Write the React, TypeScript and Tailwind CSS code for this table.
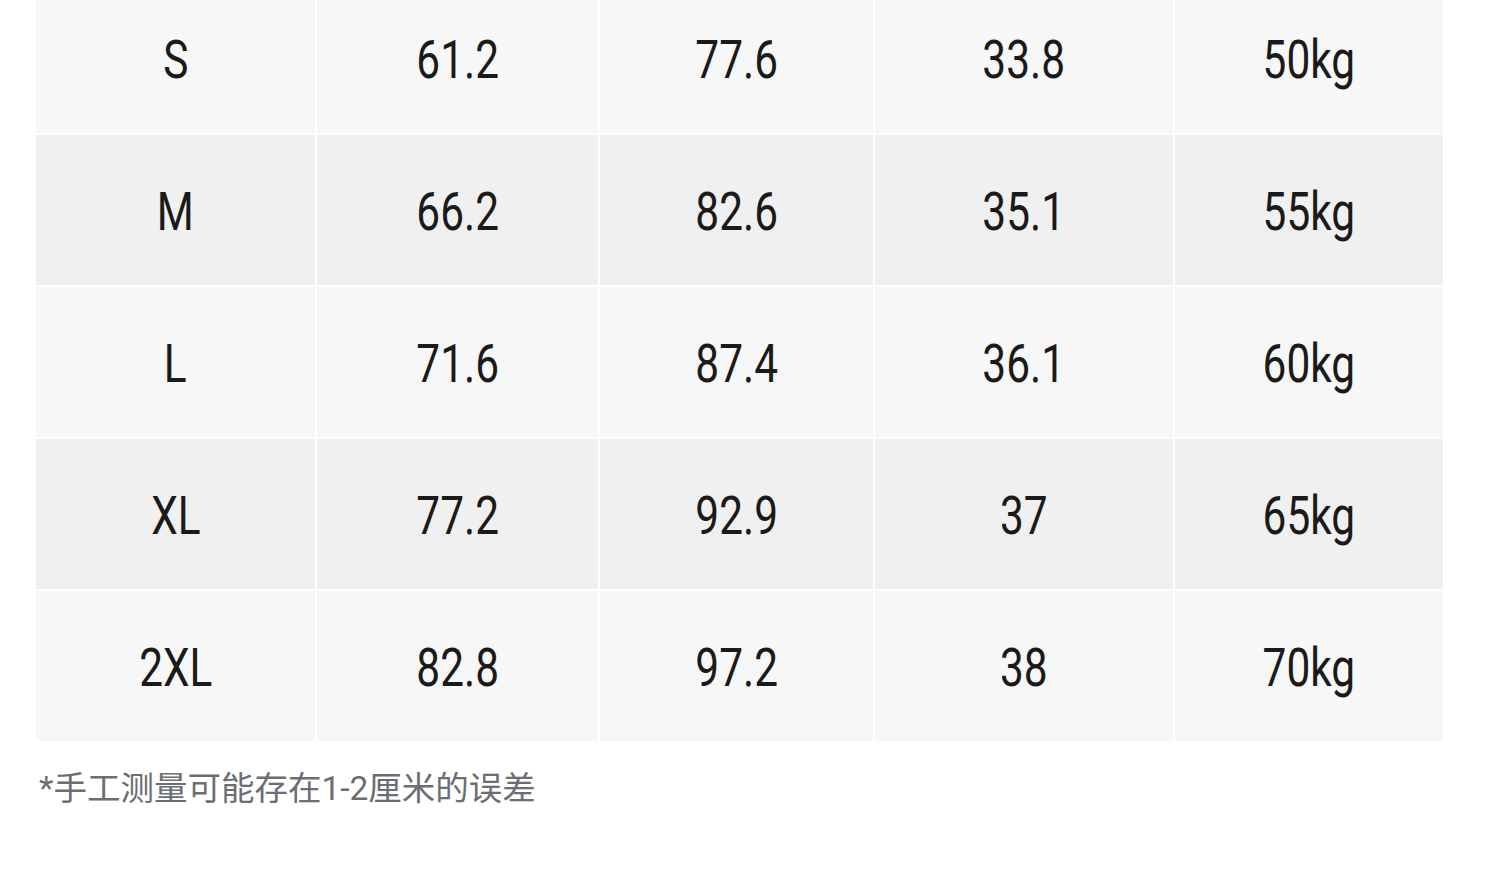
const rows = [
  ['S', '61.2', '77.6', '33.8', '50kg'],
  ['M', '66.2', '82.6', '35.1', '55kg'],
  ['L', '71.6', '87.4', '36.1', '60kg'],
  ['XL', '77.2', '92.9', '37', '65kg'],
  ['2XL', '82.8', '97.2', '38', '70kg'],
];

export default function App() {
  return (
    <div className="w-[1500px] h-[885px] overflow-hidden bg-white">
      {/* size chart, top row is cut off by the viewport */}
      <div className="-mt-[17px] ml-[36px] grid grid-cols-[279px_281px_273px_298px_268px] gap-[2px]">
        {rows.map((row, i) =>
          row.map((cell, j) => (
            <div
              key={`${i}-${j}`}
              className={`h-[150px] pt-[4px] flex items-center justify-center ${
                i % 2 === 0 ? 'bg-[#f7f7f7]' : 'bg-[#f0f0f0]'
              }`}
            >
              <span className="inline-block scale-x-[0.8] text-[53px] leading-none text-[#1a1a1a] font-['Roboto',sans-serif]">
                {cell}
              </span>
            </div>
          )),
        )}
      </div>

      <p className="mt-[31px] ml-[39px] text-[33.5px] leading-none text-[#6b6e72] font-['Roboto','Noto_Sans_CJK_SC',sans-serif]">
        *手工测量可能存在1-2厘米的误差
      </p>
    </div>
  );
}
